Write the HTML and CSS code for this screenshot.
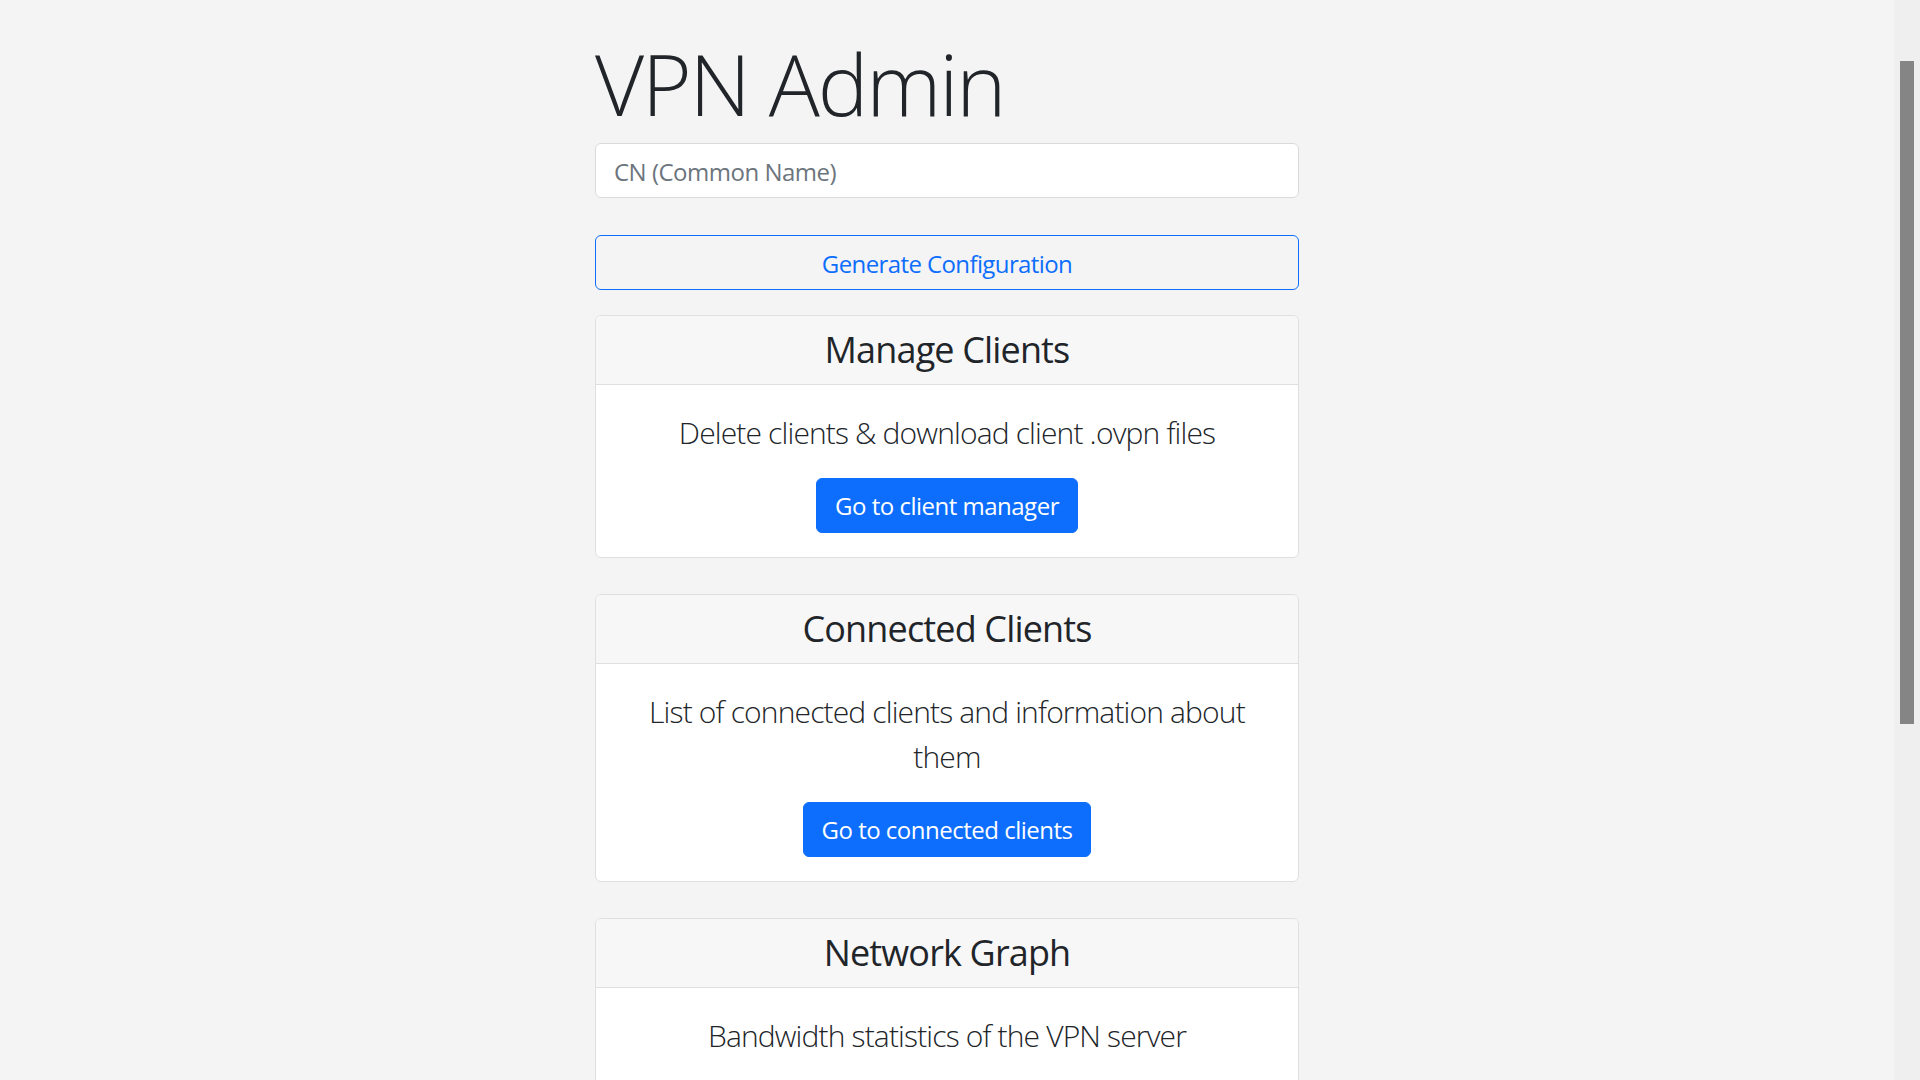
FILE: index.html
```html
<!DOCTYPE html>
<html lang="en">
<head>
<meta charset="utf-8">
<title>VPN Admin</title>
<link rel="stylesheet" href="styles.css">
</head>
<body>
<div class="window">
  <main class="page">
    <div class="container">
      <h1 class="title">VPN Admin</h1>
      <form class="gen-form">
        <input class="field" type="text" placeholder="CN (Common Name)">
        <button class="btn btn-outline" type="button">Generate Configuration</button>
      </form>

      <section class="card">
        <div class="card-header"><h4 class="card-title">Manage Clients</h4></div>
        <div class="card-body">
          <p class="lead">Delete clients &amp; download client .ovpn files</p>
          <a class="btn btn-primary" href="#">Go to client manager</a>
        </div>
      </section>

      <section class="card">
        <div class="card-header"><h4 class="card-title">Connected Clients</h4></div>
        <div class="card-body">
          <p class="lead">List of connected clients and information about them</p>
          <a class="btn btn-primary" href="#">Go to connected clients</a>
        </div>
      </section>

      <section class="card">
        <div class="card-header"><h4 class="card-title">Network Graph</h4></div>
        <div class="card-body">
          <p class="lead">Bandwidth statistics of the VPN server</p>
          <a class="btn btn-primary" href="#">Go to network graph</a>
        </div>
      </section>
    </div>
  </main>
  <div class="scrollbar"><div class="thumb"></div></div>
</div>
</body>
</html>
```

FILE: styles.css
```css
html, body {
  margin: 0;
  height: 100%;
  overflow: hidden;
}

body {
  background: #f4f4f4;
  color: #212529;
  font-family: "Open Sans", "Noto Sans", "Liberation Sans", sans-serif;
}

.window {
  display: flex;
  height: 100vh;
}

.page {
  flex: 1;
  overflow: hidden;
}

.container {
  width: 704px;
  margin: 0 auto;
  padding-top: 32px;
}

.title {
  font-size: 85px;
  font-weight: 300;
  line-height: 102px;
  margin: 0 0 9px;
  letter-spacing: -2.1px;
}

.gen-form {
  margin: 0 0 25px;
}

.field {
  display: block;
  box-sizing: border-box;
  width: 100%;
  height: 55px;
  margin: 0 0 37px;
  padding: 2px 18px 0;
  border: 1px solid #d8dbde;
  border-radius: 6px;
  background: #fff;
  font-family: inherit;
  font-size: 24px;
  letter-spacing: -0.5px;
  color: #212529;
}

.field::placeholder {
  color: #6c757d;
}

.btn {
  box-sizing: border-box;
  display: inline-block;
  border: 1px solid #0d6efd;
  border-radius: 6px;
  font-family: inherit;
  font-size: 24px;
  font-weight: 400;
  line-height: 36px;
  letter-spacing: -0.5px;
  text-decoration: none;
  cursor: pointer;
}

.btn-outline {
  display: block;
  width: 100%;
  height: 55px;
  padding: 2px 0 0;
  background: transparent;
  color: #0d6efd;
  letter-spacing: -0.6px;
}

.btn-primary {
  padding: 9px 18px 8px;
  background: #0d6efd;
  color: #fff;
}

.card {
  background: #fff;
  border: 1px solid #dfdfdf;
  border-radius: 6px;
  margin: 0 0 36px;
  overflow: hidden;
}

.card-header {
  background: #f7f7f7;
  border-bottom: 1px solid #dfdfdf;
  padding: 12px 24px;
  text-align: center;
}

.card-title {
  margin: 0;
  font-size: 36px;
  font-weight: 400;
  line-height: 44px;
  letter-spacing: -0.85px;
}

.card-body {
  padding: 25px 24px 24px;
  text-align: center;
}

.lead {
  margin: 0 0 23px;
  font-size: 30px;
  font-weight: 300;
  line-height: 45px;
  letter-spacing: -0.85px;
}

.scrollbar {
  flex: none;
  box-sizing: border-box;
  width: 26px;
  padding: 61px 6px 0;
  background: #efefef;
}

.thumb {
  height: 663px;
  background: #858585;
}
```
